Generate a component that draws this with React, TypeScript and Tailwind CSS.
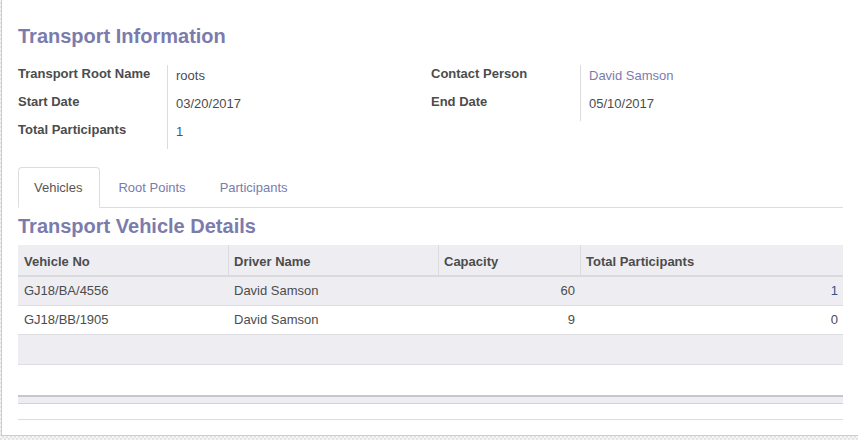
const leftFields = [
  { label: "Transport Root Name", value: "roots" },
  { label: "Start Date", value: "03/20/2017" },
  { label: "Total Participants", value: "1", tone: "text-[#35558a]" },
];

const rightFields = [
  { label: "Contact Person", value: "David Samson", tone: "text-[#7c7bad]" },
  { label: "End Date", value: "05/10/2017" },
];

const vehicles = [
  { no: "GJ18/BA/4556", driver: "David Samson", capacity: 60, participants: 1 },
  { no: "GJ18/BB/1905", driver: "David Samson", capacity: 9, participants: 0 },
];

type Field = { label: string; value: string; tone?: string };

function FieldGroup({ fields }: { fields: Field[] }) {
  return (
    <div className="grid grid-cols-[149px_1fr] content-start">
      {fields.map((field) => (
        <div key={field.label} className="contents">
          <div className="h-[28px] font-bold leading-[18px] text-[#4c4c4c]">{field.label}</div>
          <div className={`h-[28px] border-l border-[#dcdcdc] pl-2 pt-[2px] leading-[18px] ${field.tone ?? "text-[#4c4c4c]"}`}>
            {field.value}
          </div>
        </div>
      ))}
    </div>
  );
}

export default function App() {
  return (
    <div className="h-[440px] w-[858px] overflow-hidden bg-[repeating-conic-gradient(#e4e4e4_0%_25%,#f6f6f6_0%_50%)] bg-[length:4px_4px] pl-px font-['Liberation_Sans',Arial,sans-serif] text-[13px] text-[#4c4c4c]">
      <div className="h-[436px] border-b border-l border-[#cccccc] bg-white pl-4 pr-[15px] pt-[25px]">
        <h1 className="text-[20px] font-bold leading-[22px] text-[#7c7bad]">Transport Information</h1>

        <div className="mt-[18px] grid grid-cols-[413px_1fr]">
          <FieldGroup fields={leftFields} />
          <FieldGroup fields={rightFields} />
        </div>

        <ul className="mt-[18px] flex border-b border-[#dddddd]">
          <li className="-mb-px mr-[2px] flex h-[41px] items-center rounded-t border border-[#dddddd] border-b-white bg-white pl-[15px] pr-[17px] text-[#555555]">
            Vehicles
          </li>
          {["Root Points", "Participants"].map((tab) => (
            <li key={tab} className="-mb-px mr-[2px] flex h-[41px] items-center border border-transparent px-[15px] text-[#7c7bad]">
              {tab}
            </li>
          ))}
        </ul>

        <h1 className="mt-[7px] text-[20px] font-bold leading-[22px] text-[#7c7bad]">Transport Vehicle Details</h1>

        <table className="mt-[8px] w-full table-fixed border-separate border-spacing-0">
          <colgroup>
            <col className="w-[210px]" />
            <col className="w-[210px]" />
            <col className="w-[142px]" />
            <col />
          </colgroup>
          <thead>
            <tr>
              {["Vehicle No", "Driver Name", "Capacity", "Total Participants"].map((heading, i) => (
                <th
                  key={heading}
                  className={`h-[32px] border-b-2 border-[#d9d9de] bg-[#eeeef2] pb-0 pr-[5px] pt-[3px] text-left font-bold text-[#4c4c4c] ${i > 0 ? "border-l border-l-[#dcdce0] pl-[5px]" : "pl-[6px]"}`}
                >
                  {heading}
                </th>
              ))}
            </tr>
          </thead>
          <tbody>
            {vehicles.map((v, i) => (
              <tr key={v.no} className={i % 2 === 0 ? "bg-[#eeeef2]" : "bg-white"}>
                <td className="h-[29px] border-b border-[#dddde2] py-0 pl-[6px]">{v.no}</td>
                <td className="h-[29px] border-b border-[#dddde2] py-0 pl-[6px]">{v.driver}</td>
                <td className="h-[29px] border-b border-[#dddde2] py-0 pr-[5px] text-right">{v.capacity}</td>
                <td className={`h-[29px] border-b border-[#dddde2] py-0 pr-[5px] text-right ${v.participants ? "text-[#35558a]" : ""}`}>
                  {v.participants}
                </td>
              </tr>
            ))}
            <tr className="bg-[#eeeef2]">
              <td colSpan={4} className="h-[30px] border-b border-[#dddde2] p-0" />
            </tr>
            <tr className="bg-white">
              <td colSpan={4} className="h-[30px] p-0" />
            </tr>
          </tbody>
          <tfoot>
            <tr>
              <td colSpan={4} className="h-[9px] border-b border-t-2 border-[#d3d3d8] border-t-[#c6c6cc] bg-[#eeeef2] p-0" />
            </tr>
          </tfoot>
        </table>

        <div className="mt-[15px] border-t border-[#dddddd]" />
      </div>
    </div>
  );
}
